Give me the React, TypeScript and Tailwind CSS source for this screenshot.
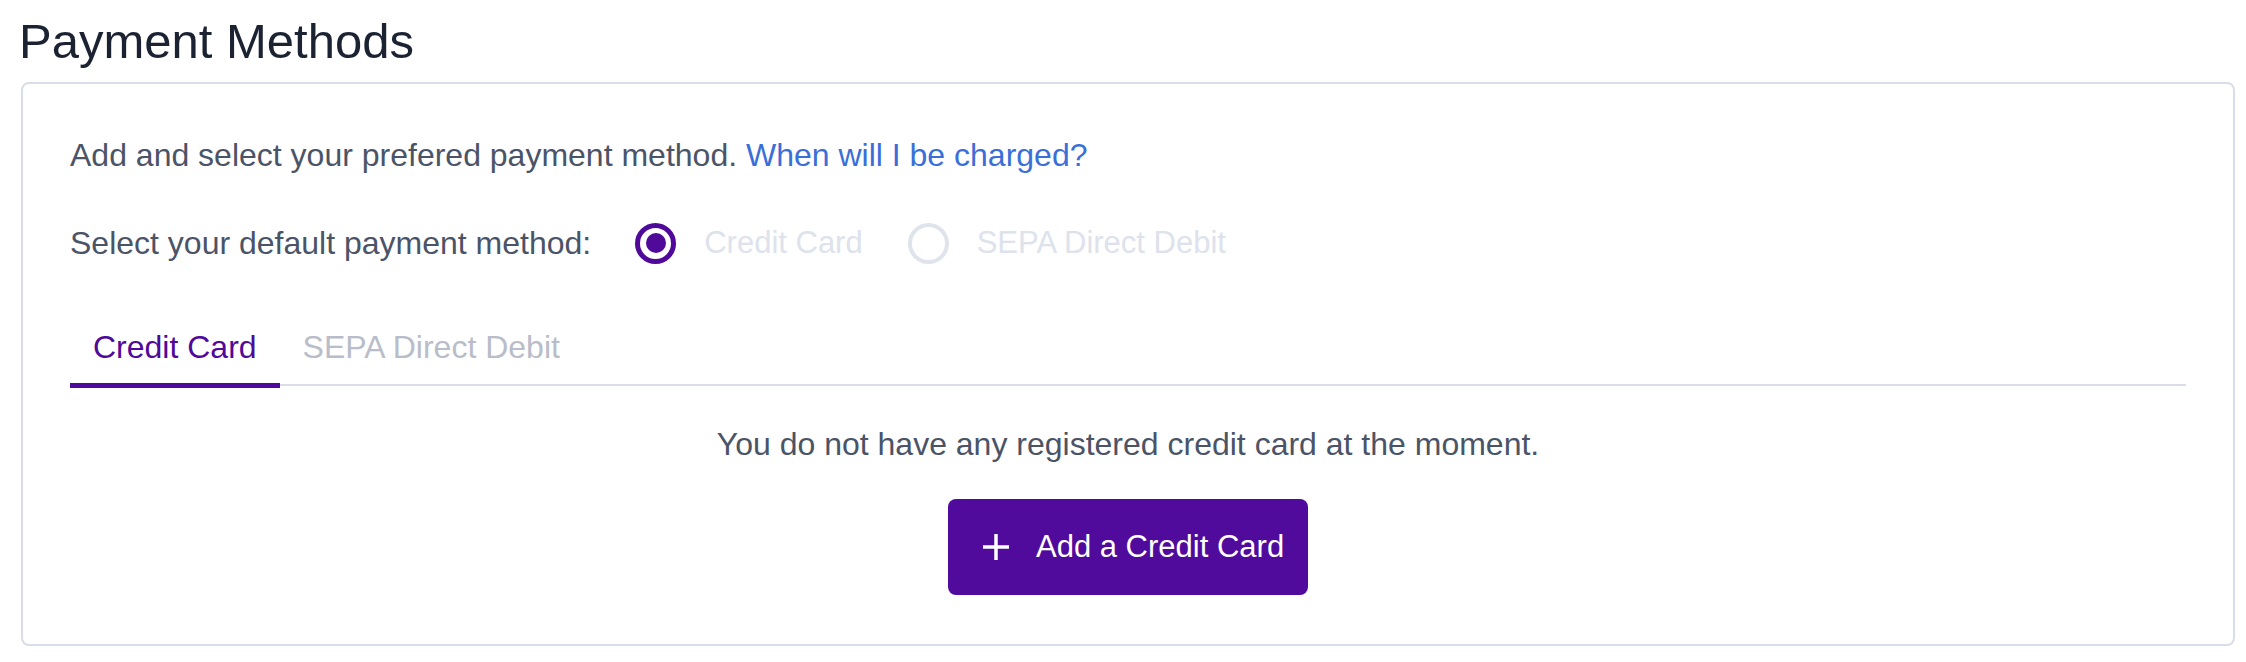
import { useState } from "react";

const font = { fontFamily: '"Liberation Sans", Arial, sans-serif' };

function Radio({ checked, label, onSelect }: { checked: boolean; label: string; onSelect: () => void }) {
  return (
    <button type="button" onClick={onSelect} className="flex items-center gap-[28px] mr-[45px]">
      {checked ? (
        <span className="w-[41px] h-[41px] rounded-full border-[5px] border-[#4f0a9a] flex items-center justify-center">
          <span className="w-[20px] h-[20px] rounded-full bg-[#4f0a9a]" />
        </span>
      ) : (
        <span className="w-[41px] h-[41px] rounded-full border-[4px] border-[#dfe3ec]" />
      )}
      <span className="text-[#dde2ec] text-[31px]">{label}</span>
    </button>
  );
}

export default function App() {
  const [method, setMethod] = useState<"card" | "sepa">("card");
  const [tab, setTab] = useState<"card" | "sepa">("card");

  return (
    <div className="bg-white text-[32px] leading-[46px]" style={font}>
      <h1 className="ml-[19px] pt-[11px] text-[49px] leading-[60px] text-[#1b2333]">Payment Methods</h1>

      <div className="ml-[21px] mt-[11px] w-[2214px] border-2 border-[#d8dde7] rounded-[8px] px-[47px] pt-[48px] pb-[49px]">
        <p className="text-[#4b5467]">
          Add and select your prefered payment method.{" "}
          <a href="#" className="text-[#3a6fd8]">When will I be charged?</a>
        </p>

        <div className="mt-[42px] flex items-center text-[#4b5467]">
          <span className="mr-[44px]">Select your default payment method:</span>
          <Radio checked={method === "card"} label="Credit Card" onSelect={() => setMethod("card")} />
          <Radio checked={method === "sepa"} label="SEPA Direct Debit" onSelect={() => setMethod("sepa")} />
        </div>

        <div className="mt-[42px] flex border-b-2 border-[#dadde8]">
          <button
            type="button"
            onClick={() => setTab("card")}
            className={`px-[23px] pt-[16px] pb-[13px] -mb-[4px] border-b-[5px] ${
              tab === "card" ? "border-[#4f0a9a] text-[#4f0a9a]" : "border-transparent text-[#b9bdc9]"
            }`}
          >
            Credit Card
          </button>
          <button
            type="button"
            onClick={() => setTab("sepa")}
            className={`px-[23px] pt-[16px] pb-[13px] -mb-[4px] border-b-[5px] ${
              tab === "sepa" ? "border-[#4f0a9a] text-[#4f0a9a]" : "border-transparent text-[#b9bdc9]"
            }`}
          >
            SEPA Direct Debit
          </button>
        </div>

        <div className="flex flex-col items-center">
          <p className="mt-[35px] text-[#4b5467]">
            {tab === "card"
              ? "You do not have any registered credit card at the moment."
              : "You do not have any registered SEPA mandate at the moment."}
          </p>
          <button
            type="button"
            className="mt-[32px] h-[96px] w-[360px] rounded-[8px] bg-[#510b9c] text-white flex items-center pl-[34px] gap-[26px]"
          >
            <svg width="28" height="28" viewBox="0 0 28 28" fill="none" stroke="currentColor" strokeWidth="3.5">
              <path d="M14 1v26M1 14h26" />
            </svg>
            <span className="text-[31px]">{tab === "card" ? "Add a Credit Card" : "Add a SEPA Mandate"}</span>
          </button>
        </div>
      </div>
    </div>
  );
}
